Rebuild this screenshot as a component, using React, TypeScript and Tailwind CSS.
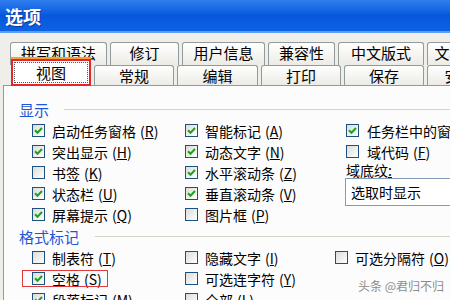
import React from "react";

type Opt = { label: string; k?: string; checked?: boolean };

const row1 = [
  { label: "拼写和语法", w: "w-[97px]" },
  { label: "修订", w: "w-[69px]" },
  { label: "用户信息", w: "w-[83px]" },
  { label: "兼容性", w: "w-[67px]" },
  { label: "中文版式", w: "w-[86px]" },
  { label: "文档安全性", w: "w-[90px]" },
];

const row2 = [
  { label: "常规", w: "w-[80px]" },
  { label: "编辑", w: "w-[81px]" },
  { label: "打印", w: "w-[80px]" },
  { label: "保存", w: "w-[80px]" },
  { label: "安全性", w: "w-[80px]" },
];

const show1: Opt[] = [
  { label: "启动任务窗格", k: "R", checked: true },
  { label: "突出显示", k: "H", checked: true },
  { label: "书签", k: "K" },
  { label: "状态栏", k: "U", checked: true },
  { label: "屏幕提示", k: "Q", checked: true },
];

const show2: Opt[] = [
  { label: "智能标记", k: "A", checked: true },
  { label: "动态文字", k: "N", checked: true },
  { label: "水平滚动条", k: "Z", checked: true },
  { label: "垂直滚动条", k: "V", checked: true },
  { label: "图片框", k: "P" },
];

const marks2: Opt[] = [
  { label: "隐藏文字", k: "I" },
  { label: "可选连字符", k: "Y" },
  { label: "全部", k: "L" },
];

function Check({ checked }: { checked?: boolean }) {
  return (
    <span className="w-[13px] h-[13px] shrink-0 border border-[#1c5180] bg-linear-to-br from-[#dcdcd7] to-white flex items-center justify-center">
      {checked && (
        <svg width="9" height="9" viewBox="0 0 9 9">
          <path d="M1 4.2 L3.5 6.8 L8 2" stroke="#21a121" strokeWidth="2" fill="none" />
        </svg>
      )}
    </span>
  );
}

function Option({ o, gap = "gap-[7px]" }: { o: Opt; gap?: string }) {
  return (
    <div className={`flex items-center h-[21px] whitespace-nowrap ${gap}`}>
      <Check checked={o.checked} />
      <span className="text-[14px] leading-none text-black">
        {o.label}
        {o.k && (
          <span className="ml-[4px]">
            (<span className="underline">{o.k}</span>)
          </span>
        )}
      </span>
    </div>
  );
}

function Heading({ text, ml }: { text: string; ml: string }) {
  return (
    <div className="flex items-center h-[22px] pl-[15px]">
      <span className="text-[15px] leading-none text-[#1f55d8]">{text}</span>
      <div className={`flex-1 h-px bg-[#d4d3c6] ${ml}`} />
    </div>
  );
}

export default function App() {
  return (
    <div className="w-[450px] h-[300px] overflow-hidden flex flex-col bg-[#efeee8] font-['Noto_Sans_CJK_SC',sans-serif] relative">
      <div className="h-[33px] shrink-0 flex items-center pl-[5px] bg-linear-to-b from-[#2f7ff0] via-[#0657dc] to-[#0d62e4] border-b-2 border-[#5a9cf2]">
        <span className="text-[18px] font-bold text-white leading-none [text-shadow:1px_1px_0_#0a3a9a]">选项</span>
      </div>

      <div className="pt-[9px] shrink-0">
        <div className="flex gap-[3px] pl-[10px] whitespace-nowrap">
          {row1.map((t) => (
            <div
              key={t.label}
              className={`${t.w} shrink-0 h-[23px] pb-[3px] flex items-center justify-center border border-b-0 border-[#919b9c] rounded-t-[3px] bg-linear-to-b from-white to-[#ecebe5] text-[15px] leading-none text-black`}
            >
              {t.label}
            </div>
          ))}
        </div>
        <div className="flex items-end gap-[3px] pl-[11px] -mt-[8px] h-[28px] whitespace-nowrap relative">
          <div className="relative z-10 w-[80px] shrink-0 h-[29px] -mb-px flex flex-col bg-white">
            <div className="h-[2px] bg-[#f0a53a]" />
            <div className="flex-1 border-2 border-[#e3262a] p-px">
              <div className="h-full border border-dotted border-[#555] flex items-center justify-center text-[15px] leading-none text-black">
                视图
              </div>
            </div>
          </div>
          {row2.map((t) => (
            <div
              key={t.label}
              className={`${t.w} shrink-0 h-[20px] flex items-center justify-center border border-b-0 border-[#919b9c] rounded-t-[3px] bg-linear-to-b from-white to-[#ecebe5] text-[15px] leading-none text-black`}
            >
              {t.label}
            </div>
          ))}
        </div>
      </div>

      <div className="flex-1 ml-[3px] border-t border-l border-[#919b9c] bg-[#fcfcfc] pt-[12px]">
        <Heading text="显示" ml="ml-[15px]" />
        <div className="flex pl-[28px]">
          <div className="w-[153px] shrink-0 flex flex-col">
            {show1.map((o) => (
              <Option key={o.label} o={o} />
            ))}
          </div>
          <div className="w-[161px] shrink-0 flex flex-col">
            {show2.map((o) => (
              <Option key={o.label} o={o} />
            ))}
          </div>
          <div className="flex-1 flex flex-col min-w-0">
            <Option o={{ label: "任务栏中的窗口", checked: true }} gap="gap-[8px]" />
            <Option o={{ label: "域代码", k: "F" }} gap="gap-[8px]" />
            <div className="h-[16px] flex items-center text-[14px] leading-none text-black whitespace-nowrap">
              域底纹<span className="underline">:</span>
            </div>
            <div className="h-[28px] w-[130px] -ml-px border border-[#7f9db9] bg-white flex items-center pl-[5px] text-[14px] leading-none text-black whitespace-nowrap">
              选取时显示
            </div>
          </div>
        </div>

        <Heading text="格式标记" ml="ml-[16px]" />
        <div className="flex pl-[28px]">
          <div className="w-[153px] shrink-0 flex flex-col">
            <Option o={{ label: "制表符", k: "T" }} />
            <div className="relative">
              <Option o={{ label: "空格", k: "S", checked: true }} />
              <span className="absolute left-[-10px] top-[2px] w-[86px] h-[17px] border border-[#e23a3a]" />
            </div>
            <Option o={{ label: "段落标记", k: "M", checked: true }} />
          </div>
          <div className="w-[150px] shrink-0 flex flex-col">
            {marks2.map((o) => (
              <Option key={o.label} o={o} />
            ))}
          </div>
          <div className="flex-1 flex flex-col">
            <Option o={{ label: "可选分隔符", k: "O" }} />
          </div>
        </div>
      </div>

      <span className="absolute left-[358px] top-[280px] text-[12px] leading-none text-[#8c8c8c] whitespace-nowrap">
        头条 @君归不归
      </span>
    </div>
  );
}
